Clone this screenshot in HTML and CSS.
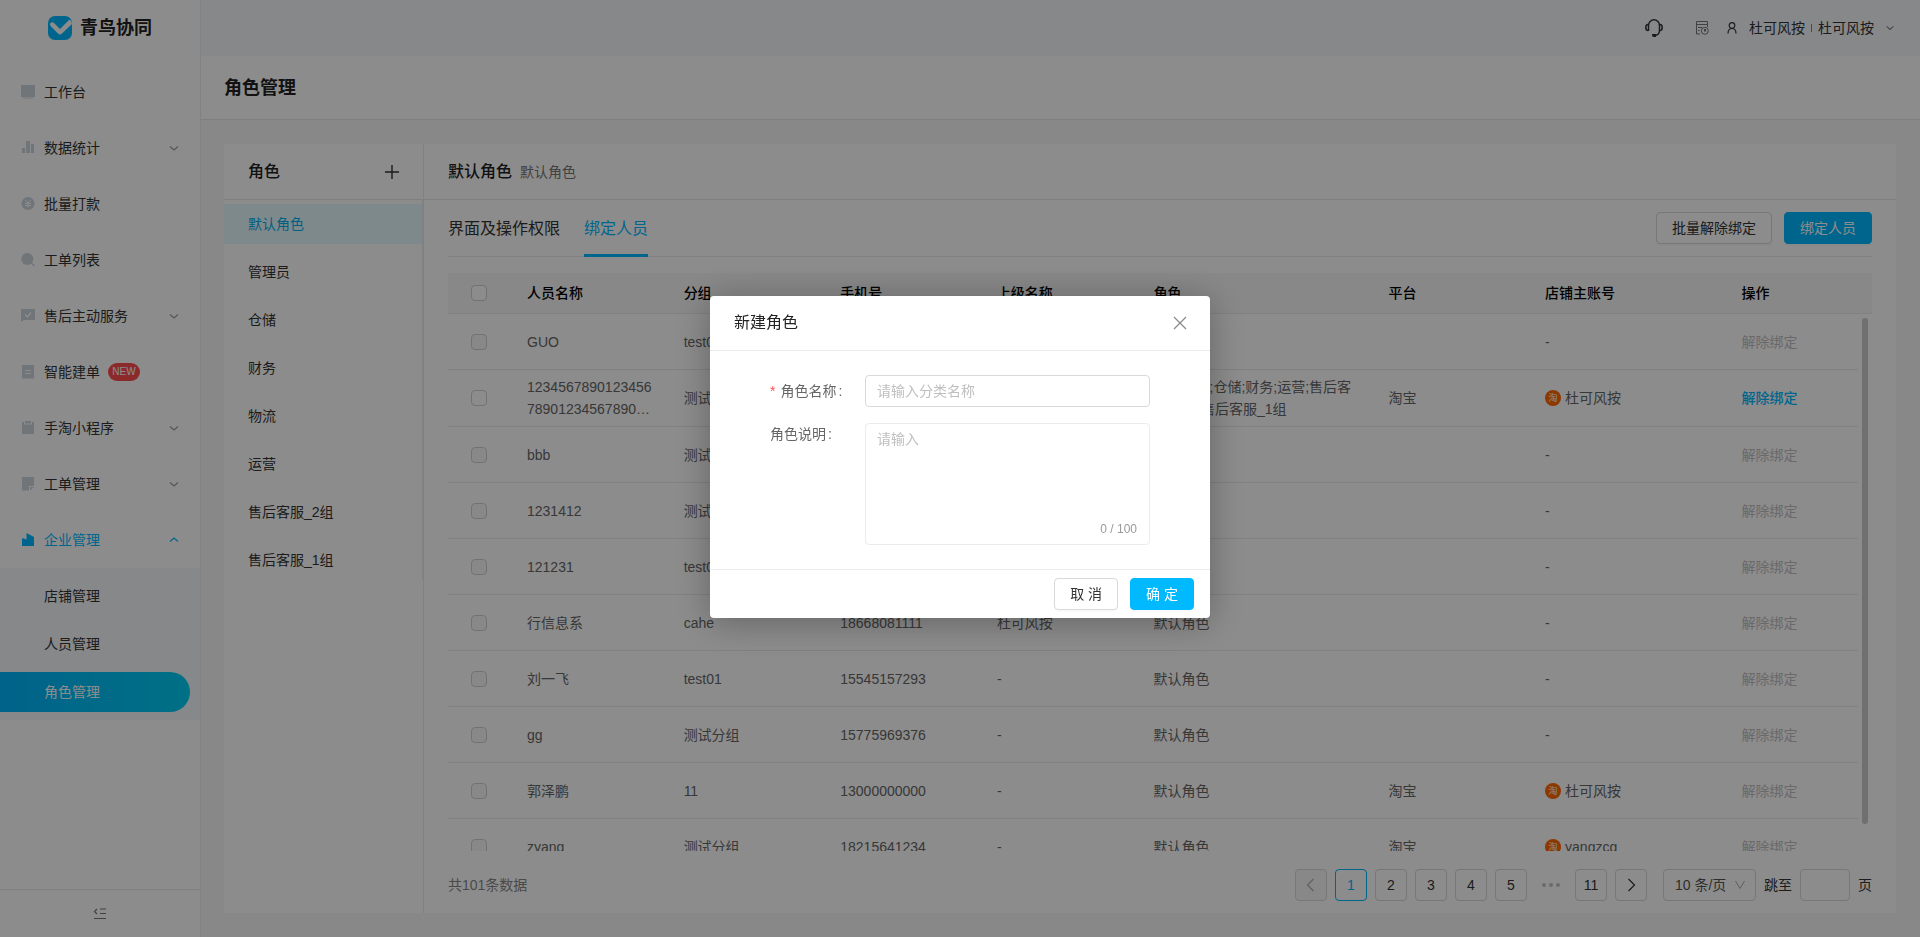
FILE: index.html
```html
<!DOCTYPE html>
<html lang="zh-CN">
<head>
<meta charset="utf-8">
<title>角色管理 - 青鸟协同</title>
<link rel="stylesheet" href="styles.css">
</head>
<body>
<svg class="defs" aria-hidden="true">
  <symbol id="down" viewBox="0 0 10 10"><path d="M1 3l4 4 4-4" fill="none" stroke="currentColor" stroke-width="1.2"/></symbol>
  <symbol id="down-flat" viewBox="0 0 10 10"><path d="M1 3.500l4 3.500 4-3.500" fill="none" stroke="currentColor" stroke-width="1.1"/></symbol>
</svg>

<div class="app">
  <aside class="sidebar">
    <div class="brand">
      <svg width="24" height="24" viewBox="0 0 24 24"><rect width="24" height="24" rx="7" fill="#00b9ff"/><path d="M2 8.500C2 6.500 4.500 5.500 6 7l6 6 9.500-9.500c.8.600 1.500 1.300 2 2.500L24 8 14 17.500c-1.500 1.300-2.700 1.200-4 0L3 10.500c-.6-.6-1-1.200-1-2z" fill="#fff"/></svg>
      <span>青鸟协同</span>
    </div>
    <nav class="menu">
      <a class="item" href="#"><svg class="ico" viewBox="0 0 14 14"><path d="M0 0h14v12H0zM2 12.500h10v1H2z"/></svg><span>工作台</span></a>
      <a class="item" href="#"><svg class="ico" viewBox="0 0 14 14"><path d="M1 7h3v5H1zM5 0h4v12H5zM10 3h3v9h-3z"/></svg><span>数据统计</span><svg class="arrow"><use href="#down-flat"/></svg></a>
      <a class="item" href="#"><svg class="ico" viewBox="0 0 14 14"><circle cx="7" cy="6.500" r="6.500"/><path d="M4.500 3L7 6l2.500-3M4 6.500h6M4 8.500h6M7 6v4.500" fill="none" stroke="#fff"/></svg><span>批量打款</span></a>
      <a class="item" href="#"><svg class="ico" viewBox="0 0 14 14"><circle cx="6.300" cy="6" r="6"/><path d="M10 9.500l3.500 3.500" stroke="currentColor" stroke-width="1.5"/></svg><span>工单列表</span></a>
      <a class="item" href="#"><svg class="ico" viewBox="0 0 14 14"><path d="M0 0h14v11H3l-3 2z"/><path d="M4 5.500L6.500 8 10 3.500" fill="none" stroke="#fff" stroke-width="1.3"/></svg><span>售后主动服务</span><svg class="arrow"><use href="#down-flat"/></svg></a>
      <a class="item" href="#"><svg class="ico" viewBox="0 0 14 14"><path d="M1 0h12v13.500H1z"/><path d="M4 5.500h6M4 8.500h6" stroke="#fff"/></svg><span>智能建单</span><em class="new">NEW</em></a>
      <a class="item" href="#"><svg class="ico" viewBox="0 0 14 14"><path d="M1 1h2v2.500h8V1h2v12H1zM4 0h6v2.500H4z"/></svg><span>手淘小程序</span><svg class="arrow"><use href="#down-flat"/></svg></a>
      <a class="item" href="#"><svg class="ico" viewBox="0 0 14 14"><path d="M1 0h12v9H8v4.500H1zM9 10h4l-4 3.500z"/></svg><span>工单管理</span><svg class="arrow"><use href="#down-flat"/></svg></a>
      <a class="item open" href="#"><svg class="ico" viewBox="0 0 14 14"><path d="M1 5l4.500 1.500V0L13 4v9H1z"/></svg><span>企业管理</span><svg class="arrow up"><use href="#down-flat"/></svg></a>
      <div class="submenu">
        <a href="#">店铺管理</a>
        <a href="#">人员管理</a>
        <a href="#" class="active">角色管理</a>
      </div>
    </nav>
    <button class="collapse" aria-label="收起"><svg width="14" height="12" viewBox="0 0 14 12"><path d="M4 1L1.500 3.500 4 6M7 1h6M7 5.500h6M1 10.500h12" fill="none" stroke="currentColor" stroke-width="1.2"/></svg></button>
  </aside>

  <div class="main">
    <header class="topbar">
      <svg class="headset" viewBox="0 0 18 18"><g fill="none" stroke="currentColor" stroke-width="1.5"><path d="M3.500 12V6.500C3.500 3.500 6 .8 9 .8s5.500 2.700 5.500 5.700v5c0 2.700-2 4.800-4.500 4.800"/><path d="M3 5.500C1.500 5.500.8 6.800.8 8.500S1.500 11.500 3 11.500M15 5.500c1.500 0 2.200 1.300 2.200 3s-.7 3-2.200 3"/></g><path d="M7 15h4v3H8.500C7.500 18 7 17 7 15z" fill="currentColor"/></svg>
      <svg class="record" viewBox="0 0 14 14"><g fill="none" stroke="currentColor"><path d="M5 13H1.500V.5h11V6M1 3.500h12M3 6.500h4M3 9.500h1.500"/><circle cx="9.800" cy="9.800" r="3.500"/><path d="M9.500 8v2.500M10.500 8v2.500"/></g></svg>
      <svg class="user" viewBox="0 0 10 12"><g fill="none" stroke="currentColor" stroke-width="1.2"><circle cx="5" cy="3.500" r="2.800"/><path d="M1 11.500c0-3 1.500-5 4-5s4 2 4 5"/></g></svg>
      <span>杜可风按</span><i></i><span>杜可风按</span>
      <svg class="caret"><use href="#down"/></svg>
    </header>
    <div class="titlebar"><h1>角色管理</h1></div>

    <main class="card">
      <section class="roles">
        <div class="cardhead"><h2>角色</h2><button aria-label="新增角色"><svg width="14" height="14" viewBox="0 0 14 14"><path d="M7 0v14M0 7h14" stroke="currentColor" stroke-width="1.4"/></svg></button></div>
        <ul>
          <li class="on">默认角色</li><li>管理员</li><li>仓储</li><li>财务</li><li>物流</li><li>运营</li><li>售后客服_2组</li><li>售后客服_1组</li>
        </ul>
      </section>

      <section class="detail">
        <div class="cardhead"><h2>默认角色</h2><span>默认角色</span></div>
        <div class="body">
          <div class="tabs">
            <button class="tab">界面及操作权限</button>
            <button class="tab on">绑定人员</button>
            <div class="actions"><button class="btn">批量解除绑定</button><button class="btn primary">绑定人员</button></div>
          </div>
          <div class="tablebox">
            <table>
              <colgroup><col class="c-check"><col class="c-2"><col class="c-2"><col class="c-2"><col class="c-2"><col class="c-3"><col class="c-2"><col class="c-shop"><col><col class="c-bar"></colgroup>
              <thead><tr><th><input type="checkbox" aria-label="全选"></th><th>人员名称</th><th>分组</th><th>手机号</th><th>上级名称</th><th>角色</th><th>平台</th><th>店铺主账号</th><th>操作</th><th></th></tr></thead>
              <tbody>
                <tr><td><input type="checkbox" disabled aria-label="GUO"></td><td>GUO</td><td>test01</td><td>13000000001</td><td>-</td><td>-</td><td></td><td>-</td><td class="off">解除绑定</td></tr>
                <tr><td><input type="checkbox" aria-label="1234567890123456"></td><td>1234567890123456<br>78901234567890…</td><td>测试分组</td><td>13000000002</td><td>-</td><td class="wrap">默认角色;仓储;财务;运营;售后客服_2组;售后客服_1组</td><td>淘宝</td><td><svg class="tao" viewBox="0 0 16 16"><circle cx="8" cy="8" r="8"/><text x="8" y="11" text-anchor="middle">淘</text></svg>杜可风按</td><td><a href="#">解除绑定</a></td></tr>
                <tr><td><input type="checkbox" disabled aria-label="bbb"></td><td>bbb</td><td>测试分组</td><td>13000000003</td><td>-</td><td>-</td><td></td><td>-</td><td class="off">解除绑定</td></tr>
                <tr><td><input type="checkbox" disabled aria-label="1231412"></td><td>1231412</td><td>测试分组</td><td>13000000004</td><td>-</td><td>-</td><td></td><td>-</td><td class="off">解除绑定</td></tr>
                <tr><td><input type="checkbox" disabled aria-label="121231"></td><td>121231</td><td>test01</td><td>13000000005</td><td>-</td><td>-</td><td></td><td>-</td><td class="off">解除绑定</td></tr>
                <tr><td><input type="checkbox" disabled aria-label="行信息系"></td><td>行信息系</td><td>cahe</td><td>18668081111</td><td>杜可风按</td><td>默认角色</td><td></td><td>-</td><td class="off">解除绑定</td></tr>
                <tr><td><input type="checkbox" disabled aria-label="刘一飞"></td><td>刘一飞</td><td>test01</td><td>15545157293</td><td>-</td><td>默认角色</td><td></td><td>-</td><td class="off">解除绑定</td></tr>
                <tr><td><input type="checkbox" disabled aria-label="gg"></td><td>gg</td><td>测试分组</td><td>15775969376</td><td>-</td><td>默认角色</td><td></td><td>-</td><td class="off">解除绑定</td></tr>
                <tr><td><input type="checkbox" disabled aria-label="郭泽鹏"></td><td>郭泽鹏</td><td>11</td><td>13000000000</td><td>-</td><td>默认角色</td><td>淘宝</td><td><svg class="tao" viewBox="0 0 16 16"><circle cx="8" cy="8" r="8"/><text x="8" y="11" text-anchor="middle">淘</text></svg>杜可风按</td><td class="off">解除绑定</td></tr>
                <tr><td><input type="checkbox" disabled aria-label="zyang"></td><td>zyang</td><td>测试分组</td><td>18215641234</td><td>-</td><td>默认角色</td><td>淘宝</td><td><svg class="tao" viewBox="0 0 16 16"><circle cx="8" cy="8" r="8"/><text x="8" y="11" text-anchor="middle">淘</text></svg>yangzcg</td><td class="off">解除绑定</td></tr>
              </tbody>
            </table>
            <div class="scrollbar"></div>
          </div>
          <footer class="pager">
            <span class="total">共101条数据</span>
            <button class="page" disabled aria-label="上一页"><svg width="14" height="14" viewBox="0 0 14 14"><path d="M9.500 1l-6 6 6 6" fill="none" stroke="currentColor" stroke-width="1.2"/></svg></button>
            <button class="page on">1</button><button class="page">2</button><button class="page">3</button><button class="page">4</button><button class="page">5</button>
            <span class="dots"><b></b><b></b><b></b></span>
            <button class="page">11</button>
            <button class="page" aria-label="下一页"><svg width="14" height="14" viewBox="0 0 14 14"><path d="M4.500 1l6 6-6 6" fill="none" stroke="currentColor" stroke-width="1.2"/></svg></button>
            <div class="size"><select aria-label="每页条数"><option>10 条/页</option></select><svg viewBox="0 0 12 12"><path d="M1.500 2L6 9.500 10.500 2" fill="none" stroke="currentColor"/></svg></div>
            <label class="jump">跳至<input type="text">页</label>
          </footer>
        </div>
      </section>
    </main>
  </div>
</div>

<div class="mask">
  <form class="modal" role="dialog" aria-labelledby="dialog-title">
    <div class="modal-head"><h3 id="dialog-title">新建角色</h3><button type="button" aria-label="关闭"><svg width="14" height="14" viewBox="0 0 14 14"><path d="M1 1l12 12M13 1L1 13" stroke="currentColor" stroke-width="1.2"/></svg></button></div>
    <div class="modal-body">
      <label for="role-name"><b>*</b>角色名称<span class="colon">:</span></label>
      <input id="role-name" type="text" placeholder="请输入分类名称">
      <label for="role-desc" class="top">角色说明<span class="colon">:</span></label>
      <div class="area"><textarea id="role-desc" placeholder="请输入"></textarea><span class="count">0 / 100</span></div>
    </div>
    <div class="modal-foot"><button type="button" class="btn">取 消</button><button type="button" class="btn primary">确 定</button></div>
  </form>
</div>
</body>
</html>
```
FILE: styles.css
```css
* { box-sizing: border-box; }
body, h1, h2, h3, ul { margin: 0; padding: 0; }
body {
  font: 14px/22px "Liberation Sans", "Noto Sans CJK SC", sans-serif;
  color: #333;
  background: #f7f7f7;
}
a { color: inherit; text-decoration: none; }
button, input, select, textarea { font: inherit; color: inherit; margin: 0; }
button { border: 0; padding: 0; background: none; }
svg { flex: none; display: block; }
.defs { display: none; }

.app { display: flex; height: 100vh; overflow: hidden; }

/* Sidebar */
.sidebar {
  flex: none;
  position: relative;
  width: 200px;
  display: flex;
  flex-direction: column;
  background: #fff;
  box-shadow: 1px 0 0 #ededed;
}
.brand {
  height: 56px;
  padding-left: 48px;
  display: flex;
  align-items: center;
  gap: 8px;
  font-size: 18px;
  font-weight: 700;
  color: #222;
}
.menu { flex: 1; padding-top: 8px; }
.item { height: 56px; padding: 0 21px; display: flex; align-items: center; }
.ico { width: 14px; height: 14px; margin-right: 9px; fill: currentColor; color: #cbd5dc; }
.arrow { width: 10px; height: 10px; margin-left: auto; color: #999; }
.up { transform: rotate(180deg); }
.open, .open .ico, .open .arrow { color: #00b9ff; }
.new {
  width: 32px;
  margin-left: 8px;
  border-radius: 9px;
  background: #ff4d4f;
  color: #fff;
  font: 10px/18px "Liberation Sans", sans-serif;
  text-align: center;
}
.submenu {
  padding: 8px 10px 8px 0;
  display: flex;
  flex-direction: column;
  gap: 8px;
  background: #f5f8fc;
}
.submenu a { padding-left: 44px; line-height: 40px; }
.submenu .active {
  border-radius: 0 20px 20px 0;
  background: linear-gradient(90deg, #00b4fa, #00cdf4);
  color: #fff;
}
.collapse {
  height: 48px;
  display: flex;
  align-items: center;
  justify-content: center;
  border-top: 1px solid #ebebeb;
  color: #777;
}

/* Page header */
.main { flex: 1; min-width: 0; display: flex; flex-direction: column; }
.topbar {
  height: 56px;
  padding: 0 26px 0 0;
  display: flex;
  align-items: center;
  justify-content: flex-end;
  background: #f5f8fc;
}
.headset { width: 18px; height: 18px; margin-right: 32px; }
.record { width: 14px; height: 14px; margin-right: 18px; color: #777; }
.user { width: 10px; height: 12px; margin-right: 12px; }
.topbar i { width: 1px; height: 8px; margin: 0 6px; background: #888; }
.caret { width: 8px; height: 8px; margin-left: 12px; }
.titlebar {
  height: 64px;
  padding: 0 24px;
  display: flex;
  align-items: center;
  background: #fff;
  border-bottom: 1px solid #e8e8e8;
}
h1 { font-size: 18px; line-height: 26px; color: #222; }

/* Content card */
.card {
  flex: 1;
  min-height: 0;
  margin: 24px;
  display: flex;
  background: #fff;
}
.roles { flex: none; width: 200px; border-right: 1px solid #ebebeb; }
.cardhead {
  height: 56px;
  padding: 0 24px;
  display: flex;
  align-items: center;
  gap: 8px;
  border-bottom: 1px solid #e8e8e8;
}
h2 { font-size: 16px; line-height: 24px; font-weight: 500; color: #222; }
.cardhead button { margin-left: auto; }
.cardhead span { color: #777; }
.roles ul {
  padding: 4px 0 0;
  display: grid;
  gap: 8px;
  list-style: none;
  border-right: 1px solid #ebebeb;
}
.roles li { height: 40px; padding-left: 24px; line-height: 40px; }
.roles .on { background: #e6f9ff; color: #00b0f0; }

.detail { flex: 1; min-width: 0; display: flex; flex-direction: column; }
.body {
  flex: 1;
  min-height: 0;
  padding: 0 24px 12px;
  display: flex;
  flex-direction: column;
}
.tabs {
  flex: none;
  height: 57px;
  display: flex;
  gap: 24px;
  border-bottom: 1px solid #ebebeb;
}
.tab { height: 57px; padding-top: 3px; font-size: 16px; border-bottom: 3px solid transparent; }
.tab.on { color: #00b9ff; border-color: #00b9ff; }
.actions { margin-left: auto; display: flex; align-items: center; gap: 12px; }
.btn {
  height: 32px;
  padding: 0 15px;
  border: 1px solid #d9d9d9;
  border-radius: 4px;
  background: #fff;
  box-shadow: 0 2px 0 rgba(0, 0, 0, 0.02);
}
.btn.primary { background: #00b9ff; border-color: #00b9ff; color: #fff; }

/* Members table */
.tablebox { flex: 1; min-height: 0; margin-top: 16px; overflow: hidden; position: relative; }
table { width: 100%; table-layout: fixed; border-collapse: separate; border-spacing: 0; }
.c-check { width: 63px; }
.c-2 { width: 11%; }
.c-3 { width: 16.5%; }
.c-shop { width: 13.8%; }
.c-bar { width: 14px; }
th, td { padding: 0 16px; text-align: left; border-bottom: 1px solid #ebebeb; }
th { height: 41px; background: #f8f8f8; font-weight: 500; color: #000; }
th:last-child { padding: 0; }
td { height: 56px; padding: 6px 16px; color: #666; }
th:first-child, td:first-child { padding: 0 0 0 23px; }
.wrap { word-break: break-all; }
td .tao { display: inline-block; width: 16px; height: 16px; margin-right: 4px; vertical-align: -3px; fill: #ff6600; }
.tao text { font-size: 9px; fill: #fff; }
td a { color: #00b9ff; font-weight: 500; }
td.off { color: #bfbfbf; }
input[type="checkbox"] {
  appearance: none;
  display: block;
  width: 16px;
  height: 16px;
  border: 1px solid #d0d0d0;
  border-radius: 4px;
  background: #fff;
}
input[type="checkbox"]:disabled { background: #f7f7f7; }
.scrollbar {
  position: absolute;
  top: 45px;
  right: 4px;
  bottom: 27px;
  width: 6px;
  border-radius: 3px;
  background: #ccc;
}

/* Pagination */
.pager { flex: none; margin-top: 18px; display: flex; align-items: center; gap: 8px; }
.total { margin-right: auto; color: #888; }
.page {
  width: 32px;
  height: 32px;
  display: flex;
  align-items: center;
  justify-content: center;
  border: 1px solid #d9d9d9;
  border-radius: 4px;
  background: #fff;
}
.page:disabled { color: #b0b0b0; background: #f7f7f7; }
.page.on { border-color: #00b9ff; color: #00b9ff; }
.dots { width: 32px; display: flex; justify-content: center; gap: 3px; }
.dots b { width: 4px; height: 4px; border-radius: 50%; background: #c4c4c4; }
.size { margin-left: 8px; display: grid; align-items: center; }
.size select, .size svg { grid-area: 1 / 1; }
.size select {
  appearance: none;
  width: 93px;
  height: 32px;
  padding: 0 11px;
  border: 1px solid #d9d9d9;
  border-radius: 4px;
  background: #fff;
  color: #555;
}
.size svg { width: 12px; height: 12px; margin-right: 10px; justify-self: end; color: #aaa; pointer-events: none; }
.jump { display: flex; align-items: center; gap: 8px; }
.jump input { width: 50px; height: 32px; border: 1px solid #d9d9d9; border-radius: 4px; background: #fff; }

/* Dialog */
.mask {
  position: fixed;
  inset: 0;
  display: flex;
  justify-content: center;
  align-items: center;
  padding-bottom: 23px;
  background: rgba(0, 0, 0, 0.45);
}
.modal {
  width: 500px;
  background: #fff;
  border-radius: 4px;
  box-shadow: 0 4px 36px rgba(0, 0, 0, 0.3);
}
.modal-head {
  height: 55px;
  padding: 0 23px 0 24px;
  display: flex;
  align-items: center;
  justify-content: space-between;
  border-bottom: 1px solid #ebebeb;
}
h3 { font-size: 16px; font-weight: 400; color: #222; }
.modal-head button { color: #888; }
.modal-body {
  padding: 24px 60px;
  display: grid;
  grid-template-columns: 95px 1fr;
  row-gap: 16px;
  align-items: center;
}
.modal-body label { color: #666; }
.modal-body label b { margin-right: 5px; font-weight: 400; color: #ff4d4f; }
.colon { margin-left: 2px; }
.modal-body .top { align-self: start; }
.modal-body input, textarea {
  display: block;
  width: 100%;
  padding: 4px 11px;
  border: 1px solid #d9d9d9;
  border-radius: 4px;
  background: #fff;
  outline: 0;
}
.modal-body input { height: 32px; }
textarea { height: 122px; border-color: #ebebeb; resize: none; }
::placeholder { color: #bfbfbf; opacity: 1; }
.area { position: relative; }
.count { position: absolute; right: 13px; bottom: 5px; font-size: 12px; color: #999; }
.modal-foot {
  padding: 8px 16px;
  display: flex;
  justify-content: flex-end;
  gap: 12px;
  border-top: 1px solid #ebebeb;
}
```
